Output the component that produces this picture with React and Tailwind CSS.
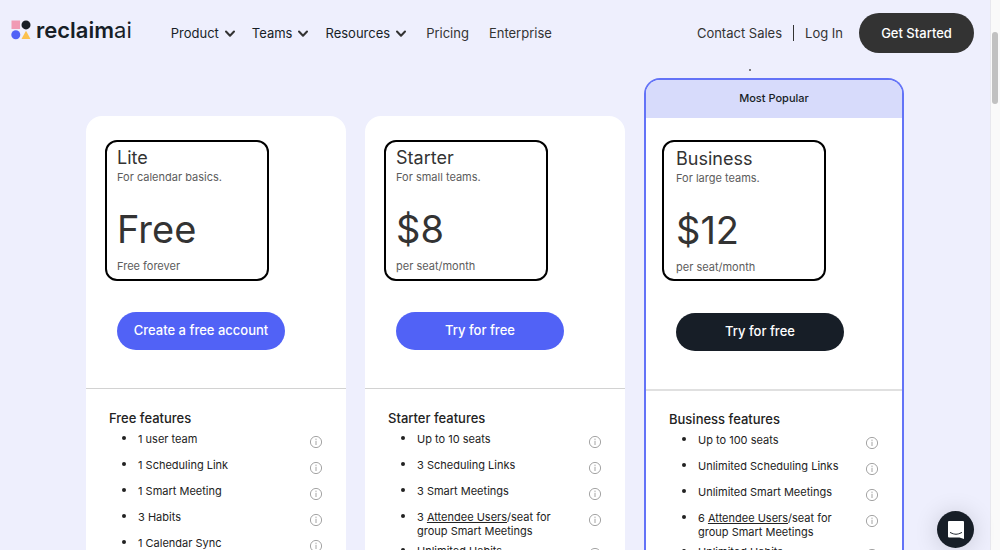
import { clsx } from "clsx";

const plans = [
  {
    name: "Lite",
    tagline: "For calendar basics.",
    price: "Free",
    unit: "Free forever",
    cta: "Create a free account",
    heading: "Free features",
    features: ["1 user team", "1 Scheduling Link", "1 Smart Meeting", "3 Habits", "1 Calendar Sync"],
  },
  {
    name: "Starter",
    tagline: "For small teams.",
    price: "$8",
    unit: "per seat/month",
    cta: "Try for free",
    heading: "Starter features",
    features: ["Up to 10 seats", "3 Scheduling Links", "3 Smart Meetings", { attendees: 3 }, "Unlimited Habits"],
  },
  {
    name: "Business",
    tagline: "For large teams.",
    price: "$12",
    unit: "per seat/month",
    cta: "Try for free",
    heading: "Business features",
    popular: true,
    features: [
      "Up to 100 seats",
      "Unlimited Scheduling Links",
      "Unlimited Smart Meetings",
      { attendees: 6 },
      "Unlimited Habits",
    ],
  },
];

function Chevron() {
  return (
    <svg viewBox="0 0 10 8" className="w-[10px] h-2 mt-px" fill="none" stroke="#333" strokeWidth="2">
      <path d="M1 1.5 5 5.7 9 1.5" strokeLinecap="round" strokeLinejoin="round" />
    </svg>
  );
}

function InfoIcon() {
  return (
    <svg viewBox="0 0 14 14" className="w-[14px] h-[14px]" fill="none" stroke="#9a9a9a">
      <circle cx="7" cy="7" r="5.6" strokeWidth="0.9" />
      <path d="M7 5.8V10" strokeWidth="0.9" />
      <circle cx="7" cy="4.2" r="0.6" fill="#9a9a9a" stroke="none" />
    </svg>
  );
}

function Logo() {
  return (
    <a href="#" className="flex items-center gap-[5px] text-[#171e27]">
      <svg viewBox="0 0 20 20" className="w-5 h-5 -mt-1.5">
        <rect x="0.5" y="0.5" width="8.5" height="8.5" fill="#f19ab4" />
        <circle cx="15" cy="4.9" r="4.5" fill="#171e27" />
        <circle cx="4.8" cy="14.7" r="4.5" fill="#5162f6" />
        <path d="M15 10.8 19.5 19H10.5Z" fill="#fcc14d" />
      </svg>
      <span className="-mt-1.5 text-[22px] leading-6 font-semibold">
        reclaim<span className="font-normal">ai</span>
      </span>
    </a>
  );
}

function Header() {
  return (
    <header className="flex items-center pl-[11px] pr-4 py-[13px] text-[13px] leading-5 text-[#333]">
      <Logo />
      <nav className="flex items-center gap-[17px] ml-[39px]">
        {["Product", "Teams", "Resources"].map((label) => (
          <button key={label} type="button" className="flex items-center gap-1.5 text-[#171e27]">
            {label}
            <Chevron />
          </button>
        ))}
        <a href="#" className="pl-[3px]">Pricing</a>
        <a href="#" className="pl-[3px]">Enterprise</a>
      </nav>
      <div className="flex items-center ml-auto">
        <a href="#">Contact Sales</a>
        <span className="w-px h-4 mx-[11px] bg-[#333]" />
        <a href="#">Log In</a>
        <button type="button" className="ml-4 w-[115px] h-10 rounded-full bg-[#333] text-white font-medium">
          Get Started
        </button>
      </div>
    </header>
  );
}

function Feature({ feature }) {
  return (
    <li className="flex items-start min-h-5 mb-1.5">
      <span className="w-1 h-1 mt-1 mr-3 rounded-full bg-[#222]" />
      <span className="flex-1 pr-5">
        {feature.attendees ? (
          <>
            {feature.attendees} <a href="#" className="underline">Attendee Users</a>/seat for
            <br />
            group Smart Meetings
          </>
        ) : (
          feature
        )}
      </span>
      <button type="button" aria-label="More info" className="flex items-center h-5">
        <InfoIcon />
      </button>
    </li>
  );
}

function PlanCard({ plan }) {
  const { popular } = plan;
  return (
    <section
      className={clsx(
        "rounded-t-2xl bg-white overflow-hidden",
        popular ? "border-2 border-b-0 border-[#6373f7]" : "mt-[38px]"
      )}
    >
      {popular && (
        <p className="h-[38px] bg-[#d7dbfb] text-center text-[11px] leading-[37px] font-medium text-[#171e27]">
          Most Popular
        </p>
      )}

      <div
        className={clsx(
          popular ? "border-b-2 border-[#e0e0e0] px-4 pt-[22px] pb-[38px]" : "border-b border-[#d2d2d2] px-[19px] pt-6 pb-[38px]"
        )}
      >
        <div
          className={clsx(
            "w-[164px] border-2 border-black rounded-xl text-[11px] leading-[14px] text-[#5c5c5c]",
            popular ? "pl-3 pt-[5px] pb-[5px]" : "pl-[10px] pt-1 pb-1.5"
          )}
        >
          <h2 className="text-lg leading-6 text-[#333]">{plan.name}</h2>
          <p>{plan.tagline}</p>
          <p className="mt-[25px] mb-2.5 text-[38px] leading-10 text-[#333]">{plan.price}</p>
          <p>{plan.unit}</p>
        </div>
        <button
          type="button"
          className={clsx(
            "w-[168px] h-[38px] rounded-full text-[13px] font-medium text-white whitespace-nowrap",
            popular ? "ml-3.5 mt-8 bg-[#171e27]" : "ml-3 mt-[31px] bg-[#5162f6]"
          )}
        >
          {plan.cta}
        </button>
      </div>

      <div className={clsx("px-[23px] text-[#222]", popular ? "pt-[18px]" : "pt-[19px]")}>
        <h3 className="text-[13px] leading-5 font-medium">{plan.heading}</h3>
        <ul className="mt-1 pl-[13px] text-[11px] leading-[14px]">
          {plan.features.map((feature, i) => (
            <Feature key={i} feature={feature} />
          ))}
        </ul>
      </div>
    </section>
  );
}

export default function App() {
  return (
    <div className="flex h-screen overflow-hidden bg-[#eeeffd] font-['Inter',sans-serif]">
      <main className="flex-1 min-w-0">
        <Header />
        <div className="max-w-[818px] mx-auto">
          <div className="flex h-3">
            <span className="w-0.5 h-0.5 mt-[3px] ml-[663px] rounded-full bg-[#555]" />
          </div>
          <div className="grid grid-cols-3 gap-[19px]">
            {plans.map((plan) => (
              <PlanCard key={plan.name} plan={plan} />
            ))}
          </div>
        </div>
      </main>

      {/* Scroll track */}
      <div className="w-[10px] pl-px pr-0.5 bg-[#fafafa] border-l border-[#e8e8ee]">
        <div className="h-[72px] mt-8 rounded-full bg-[#c1c1c1]" />
      </div>

      {/* Chat launcher */}
      <button
        type="button"
        aria-label="Open chat"
        className="fixed right-[26px] bottom-0.5 flex items-center justify-center w-[37px] h-[37px] rounded-full bg-[#171e27] shadow-[0_2px_24px_rgba(0,0,0,0.16)]"
      >
        <svg viewBox="0 0 18 20" className="w-[18px] h-5">
          <path d="M2 1H16Q17 1 17 2V19L12.5 17.5H2Q1 17.5 1 16.5V2Q1 1 2 1Z" fill="#fff" />
          <path d="M3.5 12.6Q9 16 14.5 12.6" fill="none" stroke="#171e27" strokeWidth="1.1" strokeLinecap="round" />
        </svg>
      </button>
    </div>
  );
}
